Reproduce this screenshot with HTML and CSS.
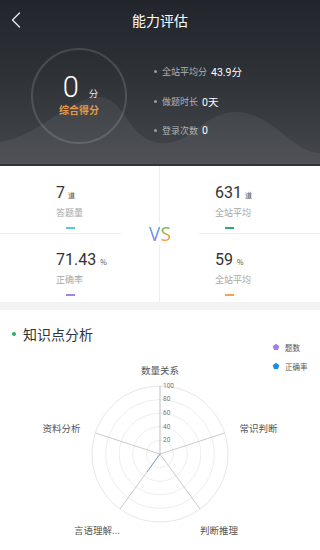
FILE: index.html
```html
<!DOCTYPE html>
<html lang="zh-CN">
<head>
<meta charset="utf-8">
<title>能力评估</title>
<link rel="stylesheet" href="styles.css">
</head>
<body>
<div class="page">
  <header class="header">
    <svg class="wave" width="320" height="166" viewBox="0 0 320 166">
      <path d="M0,142 C40,136 72,95 100,97 C126,99 128,140 160,143 C192,146 202,112 236,112 C272,112 292,152 320,153 L320,166 L0,166 Z" fill="rgba(255,255,255,0.06)"/>
    </svg>
    <div class="nav">
      <svg class="back" width="10" height="16" viewBox="0 0 10 16"><path d="M8.5,1 L1.5,8 L8.5,15" fill="none" stroke="#e6e6e6" stroke-width="1.4" stroke-linecap="round" stroke-linejoin="round"/></svg>
      <div class="title">能力评估</div>
      <div></div>
    </div>
    <div class="hero">
      <div class="ring">
        <div class="score"><span class="score-num">0</span><span class="score-unit">分</span></div>
        <div class="score-label">综合得分</div>
      </div>
      <ul class="facts">
        <li><i class="dot"></i><span class="f-label">全站平均分</span><span class="f-val">43.9分</span></li>
        <li><i class="dot"></i><span class="f-label">做题时长</span><span class="f-val">0天</span></li>
        <li><i class="dot"></i><span class="f-label">登录次数</span><span class="f-val">0</span></li>
      </ul>
    </div>
  </header>

  <section class="stats">
    <div class="cell c-tl">
      <div class="num">7<span class="unit">道</span></div>
      <div class="lbl">答题量</div>
      <div class="bar cyan"></div>
    </div>
    <div class="cell c-tr">
      <div class="num">631<span class="unit">道</span></div>
      <div class="lbl">全站平均</div>
      <div class="bar green"></div>
    </div>
    <div class="cell c-bl">
      <div class="num">71.43<span class="unit u-pct">%</span></div>
      <div class="lbl">正确率</div>
      <div class="bar purple"></div>
    </div>
    <div class="cell c-br">
      <div class="num">59<span class="unit u-pct">%</span></div>
      <div class="lbl">全站平均</div>
      <div class="bar orange"></div>
    </div>
    <div class="vs"><span class="v">V</span><span class="s">S</span></div>
  </section>

  <div class="band"></div>

  <section class="knowledge">
    <h2 class="k-title"><i class="k-dot"></i>知识点分析</h2>
    <svg class="radar" width="320" height="207" viewBox="0 0 320 207">
      <g fill="none" stroke="#e9e9e9" stroke-width="0.8">
        <circle cx="160" cy="111" r="13.6"/>
        <circle cx="160" cy="111" r="27.2"/>
        <circle cx="160" cy="111" r="40.8"/>
        <circle cx="160" cy="111" r="54.4"/>
        <circle cx="160" cy="111" r="68" stroke="#e0e0e0"/>
      </g>
      <g stroke="#c4c4c4" stroke-width="0.9">
        <line x1="160" y1="111" x2="160" y2="43" stroke="#b8b8b8"/>
        <line x1="160" y1="111" x2="224.7" y2="90"/>
        <line x1="160" y1="111" x2="200" y2="166"/>
        <line x1="160" y1="111" x2="120" y2="166"/>
        <line x1="160" y1="111" x2="95.3" y2="90"/>
      </g>
      <line x1="160" y1="111" x2="147" y2="129" stroke="#7fa9c4" stroke-width="1"/>
      <g class="scale" fill="#777" font-size="6.5">
        <text x="163" y="45">100</text>
        <text x="163" y="58">80</text>
        <text x="163" y="72">60</text>
        <text x="163" y="86">40</text>
        <text x="163" y="99">20</text>
      </g>
      <g class="axis" fill="#555" font-size="9.5" text-anchor="middle">
        <text x="160" y="30.5">数量关系</text>
        <text x="258.5" y="88.5">常识判断</text>
        <text x="61.5" y="88.5">资料分析</text>
        <text x="97" y="190.5">言语理解...</text>
        <text x="219" y="190.5">判断推理</text>
      </g>
      <polygon points="276,0.8 279.3,3.2 278,7 274,7 272.7,3.2" fill="#a57ee6"/>
      <polygon points="276,19.8 279.3,22.2 278,26 274,26 272.7,22.2" fill="#1a8fe0"/>
      <g class="legend" fill="#555" font-size="7.5">
        <text x="285" y="7.5">题数</text>
        <text x="285" y="26.5">正确率</text>
      </g>
    </svg>
  </section>
</div>
</body>
</html>
```

FILE: styles.css
```css
* { box-sizing: border-box; }
html, body { margin: 0; padding: 0; }
body {
  width: 320px;
  height: 550px;
  overflow: hidden;
  background: #fff;
  font-family: "Noto Sans CJK SC", "Noto Sans", sans-serif;
}
.page { width: 320px; }

.header {
  position: relative;
  height: 166px;
  background: linear-gradient(180deg, #22252b 0%, #2e3136 45%, #44474c 100%);
  border-bottom: 2px solid #303338;
  overflow: hidden;
}
.wave { position: absolute; left: 0; top: 0; }
.nav {
  position: relative;
  height: 40px;
  display: grid;
  grid-template-columns: 40px 1fr 40px;
  align-items: center;
}
.back { margin-left: 11px; margin-top: -1px; }
.title {
  text-align: center;
  color: #fff;
  font-size: 14px;
  line-height: 20px;
  margin-top: -1px;
}
.hero {
  position: relative;
  display: flex;
  align-items: flex-start;
  padding-top: 7.5px;
}
.ring {
  width: 96px;
  height: 96px;
  margin-left: 31px;
  border: 2px solid rgba(255,255,255,0.14);
  border-radius: 50%;
  display: flex;
  flex-direction: column;
  align-items: center;
  padding-top: 23px;
}
.score {
  display: flex;
  align-items: baseline;
  height: 28px;
  margin-left: 3px;
}
.score-num {
  font-family: Roboto, "Noto Sans", sans-serif;
  font-weight: 300;
  font-size: 29px;
  line-height: 28px;
  color: #fff;
}
.score-unit {
  font-size: 9.5px;
  color: #e8e8e8;
  margin-left: 10px;
}
.score-label {
  margin-top: 2px;
  font-size: 10px;
  line-height: 14px;
  font-weight: 700;
  color: #e59a43;
}
.facts {
  list-style: none;
  margin: 16px 0 0 27px;
  padding: 0;
  display: flex;
  flex-direction: column;
  gap: 13.5px;
}
.facts li {
  display: flex;
  align-items: center;
  height: 16px;
}
.dot {
  width: 3px;
  height: 3px;
  border-radius: 50%;
  background: #9a9b9e;
  margin-right: 5px;
}
.f-label {
  font-size: 9px;
  color: #b0b1b4;
  margin-right: 4px;
}
.f-val {
  font-family: Roboto, "Noto Sans CJK SC", sans-serif;
  font-size: 10.5px;
  color: #fff;
}

.stats {
  position: relative;
  display: grid;
  grid-template-columns: 160px 160px;
  grid-template-rows: 68px 68px;
}
.cell {
  padding: 17px 0 0 56px;
}
.c-tl, .c-tr { border-bottom: 1px solid #eeeeee; }
.c-tl, .c-bl { border-right: 1px solid #eeeeee; }
.c-tl, .c-bl { padding-left: 56px; }
.c-tr, .c-br { padding-left: 55px; }
.c-bl, .c-br { padding-top: 16px; }
.num {
  font-family: Roboto, "Noto Sans", sans-serif;
  font-size: 16px;
  line-height: 20px;
  color: #333;
  display: flex;
  align-items: baseline;
}
.unit {
  font-family: "Noto Sans CJK SC", sans-serif;
  font-size: 7px;
  color: #555;
  margin-left: 3px;
}
.u-pct { margin-left: 4px; }
.lbl {
  margin-top: 1px;
  font-size: 9px;
  line-height: 14px;
  color: #a6a6a6;
}
.bar {
  width: 9px;
  height: 2px;
  margin: 7px 0 0 10px;
}
.cyan { background: #5cc6de; }
.green { background: #2aae72; }
.purple { background: #a384e3; }
.orange { background: #f4a24c; }

.vs {
  position: absolute;
  left: 121px;
  top: 57px;
  width: 78px;
  height: 22px;
  background: #fff;
  display: flex;
  justify-content: center;
  align-items: center;
  font-family: "Noto Sans", sans-serif;
  font-weight: 400;
  font-size: 19px;
  line-height: 22px;
}
.v {
  background: linear-gradient(180deg, #4fb4ee 0%, #9a78e4 100%);
  -webkit-background-clip: text;
  background-clip: text;
  color: transparent;
}
.s {
  background: linear-gradient(180deg, #35bb80 0%, #f6a040 65%);
  -webkit-background-clip: text;
  background-clip: text;
  color: transparent;
}

.band {
  height: 8px;
  background: #f3f3f3;
}
.knowledge { background: #fff; }
.k-title {
  margin: 0;
  padding: 15px 0 0 12px;
  height: 33px;
  display: flex;
  align-items: center;
  font-size: 14px;
  line-height: 18px;
  font-weight: 400;
  color: #333;
}
.k-dot {
  width: 4px;
  height: 4px;
  border-radius: 50%;
  background: #25b16e;
  margin-right: 7px;
}
.radar { display: block; }
.radar text { font-family: "Noto Sans CJK SC", "Noto Sans", sans-serif; }
.scale text { font-family: Roboto, "Noto Sans", sans-serif; }
```
